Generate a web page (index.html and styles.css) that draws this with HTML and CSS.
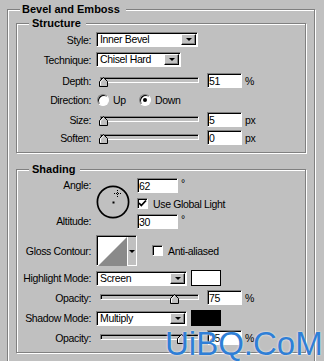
FILE: index.html
```html
<!DOCTYPE html>
<html lang="en">
<head>
    <meta charset="UTF-8">
    <meta name="viewport" content="width=device-width, initial-scale=1.0">
    <title>Bevel and Emboss</title>
    <link rel="stylesheet" href="styles.css">
</head>
<body>
    <fieldset class="group outer">
        <legend>Bevel and Emboss</legend>

        <fieldset class="group inner structure">
            <legend>Structure</legend>
            <div class="row r-style">
                <span class="lbl">Style:</span>
                <div class="select w-style"><span class="val">Inner Bevel</span><span class="btn"><i class="arrow"></i></span></div>
            </div>
            <div class="row r-tech">
                <span class="lbl">Technique:</span>
                <div class="select w-tech"><span class="val">Chisel Hard</span><span class="btn"><i class="arrow"></i></span></div>
            </div>
            <div class="row r-depth">
                <span class="lbl">Depth:</span>
                <div class="slider"><div class="track"></div><svg class="thumb" style="left:0px" width="10" height="10" viewBox="0 0 10 10"><polygon points="0.5,9.5 0.5,4.5 4.5,0.5 8.5,4.5 8.5,9.5" fill="#c0c0c0" stroke="#000"/><polyline points="1.5,8.5 1.5,4.9 4.5,1.9" fill="none" stroke="#fff"/></svg></div>
                <input class="num" type="text" value="51"><span class="unit">%</span>
            </div>
            <div class="row r-dir">
                <span class="lbl">Direction:</span>
                <div class="opts">
                    <span class="opt"><span class="radio"></span>Up</span>
                    <span class="opt"><span class="radio on"></span>Down</span>
                </div>
            </div>
            <div class="row r-size">
                <span class="lbl">Size:</span>
                <div class="slider"><div class="track"></div><svg class="thumb" style="left:0px" width="10" height="10" viewBox="0 0 10 10"><polygon points="0.5,9.5 0.5,4.5 4.5,0.5 8.5,4.5 8.5,9.5" fill="#c0c0c0" stroke="#000"/><polyline points="1.5,8.5 1.5,4.9 4.5,1.9" fill="none" stroke="#fff"/></svg></div>
                <input class="num" type="text" value="5"><span class="unit">px</span>
            </div>
            <div class="row r-soften">
                <span class="lbl">Soften:</span>
                <div class="slider"><div class="track"></div><svg class="thumb" style="left:0px" width="10" height="10" viewBox="0 0 10 10"><polygon points="0.5,9.5 0.5,4.5 4.5,0.5 8.5,4.5 8.5,9.5" fill="#c0c0c0" stroke="#000"/><polyline points="1.5,8.5 1.5,4.9 4.5,1.9" fill="none" stroke="#fff"/></svg></div>
                <input class="num" type="text" value="0"><span class="unit">px</span>
            </div>
        </fieldset>

        <fieldset class="group inner shading">
            <legend>Shading</legend>
            <div class="angle">
                <span class="lbl a-angle">Angle:</span>
                <svg class="dial" width="34" height="34" viewBox="0 0 34 34">
                    <circle cx="17" cy="17" r="15.6" fill="none" stroke="#000" stroke-width="1.7"/>
                    <rect x="16.5" y="16.5" width="2" height="2" fill="#000"/>
                    <line x1="18" y1="8.5" x2="25" y2="8.5" stroke="#000" stroke-dasharray="1 1"/>
                    <line x1="21.5" y1="5" x2="21.5" y2="12" stroke="#000" stroke-dasharray="1 1"/>
                </svg>
                <div class="cell c1"><input class="num short" type="text" value="62"><span class="unit deg">°</span></div>
                <div class="cell c2"><span class="check"><svg width="9" height="9" viewBox="0 0 9 9"><polyline points="1,4 3.3,6.5 8,1.5" fill="none" stroke="#000" stroke-width="1.8"/></svg></span><span class="ctext">Use Global Light</span></div>
                <span class="lbl a-alt">Altitude:</span>
                <div class="cell c3"><input class="num short" type="text" value="30"><span class="unit deg">°</span></div>
            </div>
            <div class="row r-gloss">
                <span class="lbl">Gloss Contour:</span>
                <div class="contour">
                    <svg class="curve" width="29" height="29" viewBox="0 0 29 29"><rect width="29" height="29" fill="#fff"/><polygon points="0,29 29,0 29,29" fill="#8a8a8a"/></svg>
                    <span class="cbtn"><i class="arrow"></i></span>
                </div>
                <span class="check aa"></span><span class="ctext">Anti-aliased</span>
            </div>
            <div class="row r-high">
                <span class="lbl">Highlight Mode:</span>
                <div class="select w-mode"><span class="val">Screen</span><span class="btn"><i class="arrow"></i></span></div>
                <span class="swatch white"></span>
            </div>
            <div class="row r-op1">
                <span class="lbl">Opacity:</span>
                <div class="slider"><div class="track"></div><svg class="thumb" style="left:71px" width="10" height="10" viewBox="0 0 10 10"><polygon points="0.5,9.5 0.5,4.5 4.5,0.5 8.5,4.5 8.5,9.5" fill="#c0c0c0" stroke="#000"/><polyline points="1.5,8.5 1.5,4.9 4.5,1.9" fill="none" stroke="#fff"/></svg></div>
                <input class="num" type="text" value="75"><span class="unit">%</span>
            </div>
            <div class="row r-shadow">
                <span class="lbl">Shadow Mode:</span>
                <div class="select w-mode"><span class="val">Multiply</span><span class="btn"><i class="arrow"></i></span></div>
                <span class="swatch black"></span>
            </div>
            <div class="row r-op2">
                <span class="lbl">Opacity:</span>
                <div class="slider"><div class="track"></div><svg class="thumb" style="left:78px" width="10" height="10" viewBox="0 0 10 10"><polygon points="0.5,9.5 0.5,4.5 4.5,0.5 8.5,4.5 8.5,9.5" fill="#c0c0c0" stroke="#000"/><polyline points="1.5,8.5 1.5,4.9 4.5,1.9" fill="none" stroke="#fff"/></svg></div>
                <input class="num" type="text" value="25"><span class="unit">%</span>
            </div>
        </fieldset>
    </fieldset>

    <div class="mark">UiBQ.CoM</div>
</body>
</html>
```

FILE: styles.css
```css
* { box-sizing: border-box; }
body { margin: 0; background: #c0c0c0; color: #000; font-family: "Liberation Sans", Arial, sans-serif; font-size: 10.5px; letter-spacing: -0.35px; overflow: hidden; }

/* etched group boxes */
.group { margin: 0; min-width: 0; padding: 0; border: 1px solid #808080; box-shadow: 1px 1px 0 #fff, inset 1px 1px 0 #fff; }
.group > legend { margin-left: 12px; padding: 0 5px 0 3px; background: #c0c0c0; font-size: 11px; font-weight: bold; letter-spacing: 0; line-height: 12px; }
.outer { margin: 3px 0 0 7px; width: 308px; padding: 2px 8px 20px; }
.outer > legend { margin-left: 4px; padding: 0 6px 0 2px; }
.inner { width: 290px; }
.structure { padding: 3px 0 7px; }
.shading { margin-top: 10px; padding: 3px 0 7px; }

/* rows */
.row { display: flex; align-items: center; height: 15px; }
.lbl { flex: none; width: 74px; margin-right: 5px; text-align: right; white-space: nowrap; }
.r-style { margin-bottom: 5px; }
.r-tech { margin-bottom: 6px; }
.r-depth { margin-bottom: 5px; }
.r-dir { height: 14px; margin-bottom: 5px; }
.r-size { margin-bottom: 3px; }
.r-gloss { height: 31px; margin-top: 6px; }
.r-high { height: 16px; margin-top: 4px; }
.r-op1 { margin-top: 4px; }
.r-shadow { height: 16px; margin-top: 5px; }
.r-op2 { margin-top: 4px; }

/* sunken box used by fields */
.select, .num, .check, .contour { background: #fff; border: 1px solid; border-color: #808080 #fff #fff #808080; box-shadow: inset 1px 1px 0 #000; }

.select { display: flex; height: 15px; }
.select .val { flex: 1; padding-left: 3px; line-height: 13px; white-space: nowrap; overflow: hidden; }
.select .btn { flex: none; display: flex; align-items: center; justify-content: center; width: 15px; height: 11px; margin: 1px 1px 1px 0; background: #c0c0c0; border: 1px solid; border-color: #fff #000 #000 #fff; box-shadow: inset -1px -1px 0 #808080; }
.arrow { display: block; width: 0; height: 0; border-left: 3px solid transparent; border-right: 3px solid transparent; border-top: 3px solid #000; }
.w-style { width: 102px; }
.w-tech { width: 85px; }
.w-mode { width: 91px; }

.num { width: 35px; height: 15px; margin: 0 0 0 8px; padding: 0 0 0 1px; font: inherit; letter-spacing: inherit; color: #000; outline: none; }
.num.short { width: 41px; margin: 0; }
.unit { margin-left: 3px; }
.deg { align-self: flex-start; line-height: 11px; }

/* sliders */
.slider { position: relative; flex: none; align-self: flex-start; width: 100px; height: 10px; margin: 4px 0 0 3px; }
.track { height: 6px; margin-left: 1px; background: #c0c0c0; border: 1px solid; border-color: #808080 #fff #fff #808080; box-shadow: inset 1px 1px 0 #000; }
.thumb { position: absolute; top: 0; }

/* radios and checks */
.opts { display: grid; grid-template-columns: 42px auto; margin-left: 1px; }
.opt { display: flex; align-items: center; }
.radio { display: flex; align-items: center; justify-content: center; width: 12px; height: 12px; margin-right: 4px; border-radius: 50%; background: #fff; border: 1px solid; border-color: #808080 #fff #fff #808080; box-shadow: inset 1px 1px 0 #000; }
.radio.on::after { content: ""; width: 4px; height: 4px; border-radius: 50%; background: #000; }
.check { flex: none; display: flex; align-items: center; justify-content: center; width: 11px; height: 11px; }
.ctext { margin-left: 5px; white-space: nowrap; }
.check.aa { margin-left: 15px; }

/* angle dial */
.angle { display: grid; grid-template-columns: 74px 36px 1fr; grid-template-rows: 15px 13px 15px; column-gap: 5px; row-gap: 4px; }
.angle .lbl { width: auto; margin: 0; line-height: 15px; }
.a-angle { grid-column: 1; grid-row: 1; }
.a-alt { grid-column: 1; grid-row: 3; }
.dial { grid-column: 2; grid-row: 1 / 4; align-self: start; margin-top: 7px; }
.cell { grid-column: 3; display: flex; align-items: center; }
.c1 { grid-row: 1; }
.c2 { grid-row: 2; }
.c3 { grid-row: 3; }

/* gloss contour */
.contour { display: flex; flex: none; width: 41px; height: 31px; padding: 1px 0 0 1px; }
.curve { display: block; }
.cbtn { display: flex; align-items: center; justify-content: center; flex: 1; background: #c0c0c0; border-left: 1px solid #fff; }

.swatch { flex: none; width: 30px; height: 16px; margin-left: 4px; border: 1px solid #000; }
.swatch.white { background: #fff; }
.swatch.black { background: #000; }

/* watermark */
.mark { position: absolute; left: 165px; top: 327px; color: #2f7fd6; font-size: 33px; line-height: 33px; letter-spacing: 0; text-shadow: 0 0 2px #fff; white-space: nowrap; }
```
